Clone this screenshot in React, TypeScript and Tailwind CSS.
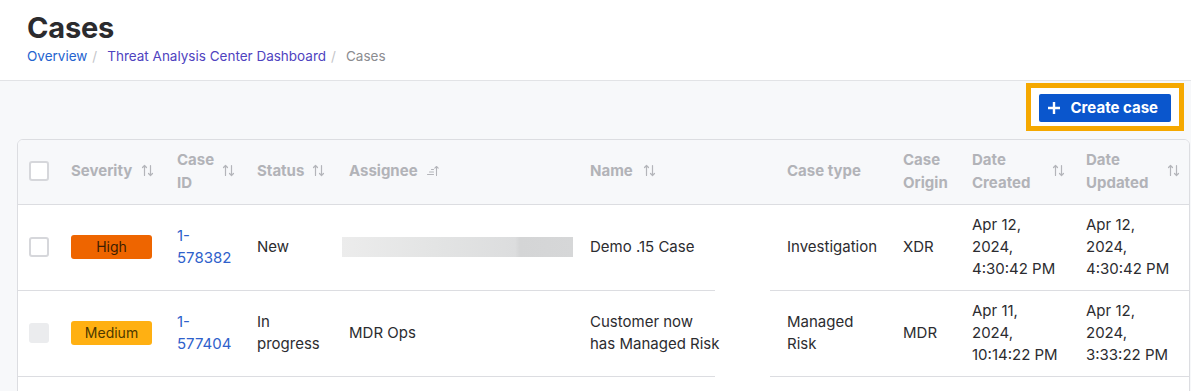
import React from "react";

type Row = {
  severity: "High" | "Medium";
  id: [string, string];
  status: string[];
  assignee: string | null;
  name: string[];
  type: string[];
  origin: string;
  created: string[];
  updated: string[];
  disabled?: boolean;
};

const rows: Row[] = [
  {
    severity: "High",
    id: ["1-", "578382"],
    status: ["New"],
    assignee: null,
    name: ["Demo .15 Case"],
    type: ["Investigation"],
    origin: "XDR",
    created: ["Apr 12,", "2024,", "4:30:42 PM"],
    updated: ["Apr 12,", "2024,", "4:30:42 PM"],
  },
  {
    severity: "Medium",
    id: ["1-", "577404"],
    status: ["In", "progress"],
    assignee: "MDR Ops",
    name: ["Customer now", "has Managed Risk"],
    type: ["Managed", "Risk"],
    origin: "MDR",
    created: ["Apr 11,", "2024,", "10:14:22 PM"],
    updated: ["Apr 12,", "2024,", "3:33:22 PM"],
    disabled: true,
  },
  {
    severity: "Medium",
    id: ["1-", "577398"],
    status: ["New"],
    assignee: "MDR Ops",
    name: ["Suspicious login"],
    type: ["Investigation"],
    origin: "MDR",
    created: ["Apr 11,", "2024,", "9:02:10 PM"],
    updated: ["Apr 11,", "2024,", "9:40:51 PM"],
  },
];

const cols = "grid grid-cols-[41px_106px_80px_92px_241px_197px_116px_69px_114px_116px]";

function SortIcon() {
  return (
    <svg width="13" height="13" viewBox="0 0 13 13" fill="none" stroke="#b4b5ba" strokeWidth="1.2" strokeLinecap="round" strokeLinejoin="round" className="shrink-0">
      <path d="M3.5 11.5V1.5M1.5 3.5l2-2 2 2" />
      <path d="M9.5 1.5v10M7.5 9.5l2 2 2-2" />
    </svg>
  );
}

function SortAscIcon() {
  return (
    <svg width="13" height="13" viewBox="0 0 13 13" fill="none" stroke="#b4b5ba" strokeWidth="1.1" strokeLinecap="round" strokeLinejoin="round" className="shrink-0">
      <path d="M4.5 5.5h2M2.5 8h4M0.5 10.5h6" />
      <path d="M9.5 11.5v-9M7.8 4.2l1.7-1.7 1.7 1.7" />
    </svg>
  );
}

function Lines({ lines }: { lines: string[] }) {
  return (
    <div>
      {lines.map((l, i) => (
        <div key={i}>{l}</div>
      ))}
    </div>
  );
}

export default function App() {
  return (
    <div className="min-h-screen bg-[#f7f8fa] text-[#2c2c30]" style={{ fontFamily: "Inter, 'Noto Sans', sans-serif" }}>
      {/* page header */}
      <header className="bg-white h-[81px] border-b border-[#e2e3e6] px-[27px] pt-[10px]">
        <h1 className="text-[29px] leading-[36px] font-bold text-[#2b2b2e] tracking-[-0.2px]">Cases</h1>
        <nav className="flex items-center text-[13.5px] leading-[20px]">
          <span className="text-[#2563cf]">Overview</span>
          <span className="text-[#c4c5c9] ml-[5px] mr-[10px]">/</span>
          <span className="text-[#4f43bf]">Threat Analysis Center Dashboard</span>
          <span className="text-[#c4c5c9] ml-[5px] mr-[10px]">/</span>
          <span className="text-[#8b8c90]">Cases</span>
        </nav>
      </header>

      {/* actions */}
      <div className="flex justify-end pr-[7px] pt-[2px]">
        <div className="border-[5px] border-[#f5a800] bg-white px-[8px] pt-[6px] pb-[4px]">
          <button className="flex items-center gap-[11px] bg-[#0a56cd] text-white rounded-[2px] h-[28px] pl-[9px] pr-[13px] text-[15px] font-bold">
            <svg width="12" height="12" viewBox="0 0 12 12" stroke="white" strokeWidth="2.4" strokeLinecap="square">
              <path d="M6 1v10M1 6h10" />
            </svg>
            Create case
          </button>
        </div>
      </div>

      {/* table */}
      <div className="relative ml-[17px] mt-[8px] w-[1173px] border border-[#dcdde1] rounded-tl-[6px] rounded-tr-[6px] bg-white overflow-hidden">
        <div className={`${cols} h-[65px] pb-[3px] items-center bg-[#f7f8fa] border-b border-[#dcdde1] text-[15px] leading-[23px] font-bold text-[#b2b3b8]`}>
          <div className="pl-[11px]">
            <div className="w-5 h-5 rounded-[3px] border-2 border-[#d6d7db] bg-white" />
          </div>
          <div className="pl-3 flex items-center gap-[9px]">
            <span>Severity</span>
            <SortIcon />
          </div>
          <div className="pl-3 flex items-center gap-[8px]">
            <span className="w-[37px]">Case ID</span>
            <SortIcon />
          </div>
          <div className="pl-3 flex items-center gap-[8px]">
            <span>Status</span>
            <SortIcon />
          </div>
          <div className="pl-3 flex items-center gap-[9px]">
            <span>Assignee</span>
            <SortAscIcon />
          </div>
          <div className="pl-3 flex items-center gap-[10px]">
            <span>Name</span>
            <SortIcon />
          </div>
          <div className="pl-3">Case type</div>
          <div className="pl-3">
            Case
            <br />
            Origin
          </div>
          <div className="pl-3 flex items-center gap-[8px]">
            <span className="w-[72px]">
              Date
              <br />
              Created
            </span>
            <SortIcon />
          </div>
          <div className="pl-3 flex items-center gap-[8px]">
            <span className="w-[73px]">
              Date
              <br />
              Updated
            </span>
            <SortIcon />
          </div>
        </div>

        {rows.map((r, i) => (
          <div key={i} className={`${cols} h-[86px] pb-[2px] items-center border-b border-[#dcdde1] text-[15px] leading-[22px]`}>
            <div className="pl-[11px]">
              {r.disabled ? (
                <div className="w-5 h-5 rounded-[3px] bg-[#ebecee]" />
              ) : (
                <div className="w-5 h-5 rounded-[3px] border-2 border-[#d6d7db] bg-white" />
              )}
            </div>
            <div className="pl-3">
              {r.severity === "High" ? (
                <span className="flex items-center justify-center w-[81px] h-[24px] rounded-[3px] bg-[#ee6500] text-[14px] text-[#3d1d00]">High</span>
              ) : (
                <span className="flex items-center justify-center w-[81px] h-[24px] rounded-[3px] bg-[#ffb012] text-[14px] text-[#4d3800]">Medium</span>
              )}
            </div>
            <div className="pl-3 text-[#2f61cb]">
              <Lines lines={r.id} />
            </div>
            <div className="pl-3">
              <Lines lines={r.status} />
            </div>
            <div className="pl-[5px]">
              {r.assignee ? (
                <div className="pl-[7px]">{r.assignee}</div>
              ) : (
                <div className="w-[231px] h-[20px] bg-[linear-gradient(90deg,#ececec_0%,#e3e4e4_40%,#dcddde_75%,#d4d5d6_77%,#d6d7d8_100%)]" />
              )}
            </div>
            <div className="pl-3 relative z-10">
              <Lines lines={r.name} />
            </div>
            <div className="pl-3">
              <Lines lines={r.type} />
            </div>
            <div className="pl-3">{r.origin}</div>
            <div className="pl-3">
              <Lines lines={r.created} />
            </div>
            <div className="pl-3">
              <Lines lines={r.updated} />
            </div>
          </div>
        ))}

        {/* white strip over the row borders between Name and Case type */}
        <div className="absolute left-[697px] top-[66px] bottom-0 w-[55px] bg-white" />
      </div>
    </div>
  );
}
